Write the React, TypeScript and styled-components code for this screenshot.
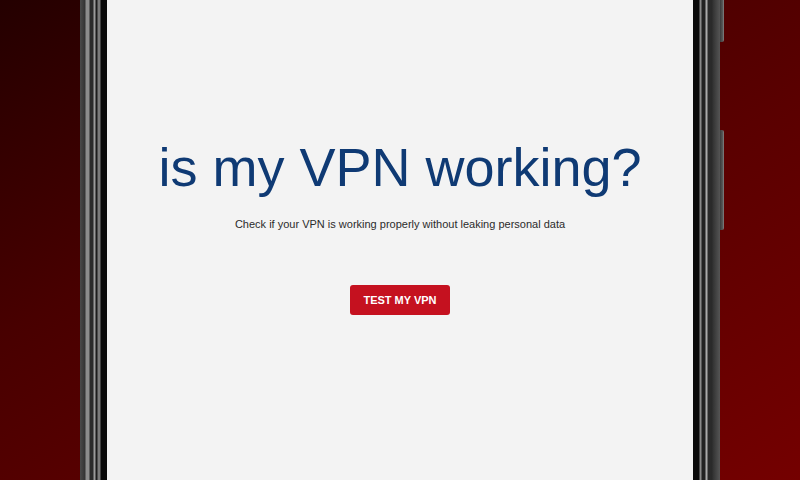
import React from "react";
import styled, { createGlobalStyle } from "styled-components";

const GlobalStyle = createGlobalStyle`
  html, body { margin: 0; padding: 0; }
  body { font-family: "Liberation Sans", Arial, sans-serif; overflow: hidden; }
`;

const Stage = styled.div`
  width: 800px;
  height: 480px;
  overflow: hidden;
  display: flex;
  justify-content: flex-start;
  padding-left: 80px;
  box-sizing: border-box;
  background: linear-gradient(to bottom right, #240000 0%, #480000 35%, #5a0000 60%, #740000 100%);
`;

const Phone = styled.div`
  position: relative;
  width: 640px;
  height: 480px;
  display: flex;
  padding: 0 27px;
  box-sizing: border-box;
  background: linear-gradient(
    to right,
    #4a4a4a 0px,
    #333 5px,
    #8c8c8c 6px,
    #8c8c8c 9px,
    #2a2a2a 10px,
    #2a2a2a 13px,
    #9a9a9a 14px,
    #9a9a9a 15px,
    #1c1c1c 16px,
    #1c1c1c 17px,
    #7a7a7a 18px,
    #7a7a7a 20px,
    #0a0a0a 21px,
    #0a0a0a 619px,
    #8a8a8a 620px,
    #8a8a8a 621px,
    #222 622px,
    #222 625px,
    #aaa 626px,
    #aaa 627px,
    #2a2a2a 628px,
    #2a2a2a 632px,
    #333 633px,
    #555 640px
  );
`;

const SideButton = styled.div<{ $top: number; $height: number }>`
  position: absolute;
  right: -4px;
  top: ${(p) => p.$top}px;
  width: 4px;
  height: ${(p) => p.$height}px;
  border-radius: 0 2px 2px 0;
  background: linear-gradient(to right, #3a3a3a, #5a5a5a 70%, #888);
`;

const Screen = styled.main`
  flex: 1;
  background: #f3f3f3;
  display: flex;
  flex-direction: column;
  align-items: center;
  padding-top: 136px;
  box-sizing: border-box;
`;

const Title = styled.h1`
  margin: 0;
  font-family: "Liberation Sans", Arial, sans-serif;
  font-weight: 400;
  font-size: 54px;
  line-height: 62px;
  color: #0f3a74;
  letter-spacing: 0px;
`;

const Subtitle = styled.p`
  margin: 19px 0 0;
  font-family: "Liberation Sans", Arial, sans-serif;
  font-size: 11px;
  line-height: 14px;
  color: #2b2b2b;
`;

const TestButton = styled.button`
  margin-top: 54px;
  width: 100px;
  height: 30px;
  border: none;
  border-radius: 3px;
  background: #c5111f;
  color: #fff;
  font-family: "Liberation Sans", Arial, sans-serif;
  font-weight: 700;
  font-size: 11px;
  padding: 0;
  cursor: pointer;
`;

export default function App() {
  return (
    <>
      <GlobalStyle />
      <Stage>
        <Phone>
          <SideButton $top={-10} $height={52} />
          <SideButton $top={130} $height={100} />
          <Screen>
            <Title>is my VPN working?</Title>
            <Subtitle>Check if your VPN is working properly without leaking personal data</Subtitle>
            <TestButton>TEST MY VPN</TestButton>
          </Screen>
        </Phone>
      </Stage>
    </>
  );
}
